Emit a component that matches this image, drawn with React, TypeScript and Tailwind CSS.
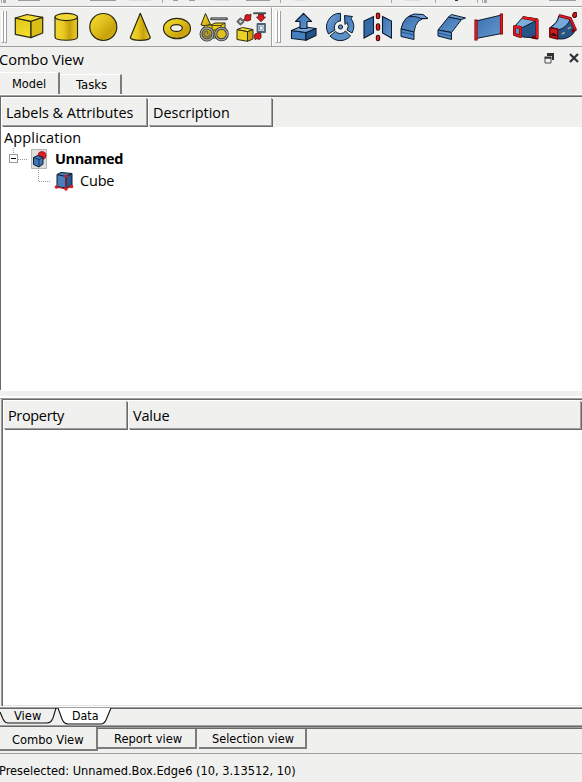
import React from "react";

const O = "#2b2a10";
const N = "#0b1b2e";

function Defs() {
  return (
    <svg className="absolute h-0 w-0">
      <defs>
        <linearGradient id="y" x1="0" y1="0" x2="1" y2="1">
          <stop offset="0" stopColor="#f8e13a" />
          <stop offset="1" stopColor="#c9a006" />
        </linearGradient>
        <linearGradient id="ys" x1="0" y1="0" x2="1" y2="1">
          <stop offset="0.1" stopColor="#f3da30" />
          <stop offset=".45" stopColor="#dcbc1a" />
          <stop offset=".7" stopColor="#c9a30c" />
          <stop offset="1" stopColor="#d9b716" />
        </linearGradient>
        <linearGradient id="yf" x1="0" y1="0" x2=".3" y2="1">
          <stop offset="0" stopColor="#e2c41c" />
          <stop offset="1" stopColor="#f2dc2a" />
        </linearGradient>
        <linearGradient id="yh" x1="0" y1="0" x2="1" y2="0">
          <stop offset="0" stopColor="#f0d830" />
          <stop offset=".35" stopColor="#e9cb22" />
          <stop offset=".65" stopColor="#c8a00c" />
          <stop offset="1" stopColor="#ecd02a" />
        </linearGradient>
        <linearGradient id="b" x1="0" y1="0" x2="1" y2="1">
          <stop offset="0" stopColor="#3a70b0" />
          <stop offset="1" stopColor="#6598cf" />
        </linearGradient>
        <linearGradient id="bd" x1="0" y1="0" x2="1" y2="1">
          <stop offset="0" stopColor="#79aadb" />
          <stop offset="1" stopColor="#3468a6" />
        </linearGradient>
      </defs>
    </svg>
  );
}

const icons: Record<string, React.ReactNode> = {
  box: (
    <g stroke={O} strokeWidth="1.2" strokeLinejoin="round">
      <path d="M1.3 6 17 9.3V25.6L1.3 22.3Z" fill="url(#yf)" />
      <path d="M17 9.3 28.7 5.3V21L17 25.6Z" fill="#dcbd18" />
      <path d="M1.3 6 13 2.5 28.7 5.3 17 9.3Z" fill="#f3dc38" />
    </g>
  ),
  cylinder: (
    <g stroke={O} strokeWidth="1.2">
      <path d="M4 5V25C4 29.3 26.5 29.3 26.5 25V5" fill="url(#yh)" />
      <ellipse cx="15.25" cy="5" rx="11.25" ry="3.6" fill="#f0d836" />
    </g>
  ),
  sphere: <circle cx="15.3" cy="15" r="13.5" fill="url(#ys)" stroke={O} strokeWidth="1.2" />,
  cone: <path d="M15.3 1.3 5.3 25.5C6.5 29.3 24 29.3 25.3 25.5Z" fill="url(#yh)" stroke={O} strokeWidth="1.2" strokeLinejoin="round" />,
  torus: (
    <path
      fillRule="evenodd"
      d="M1.5 16.5A13.5 10.2 0 0 1 28.5 16.5A13.5 10.2 0 0 1 1.5 16.5ZM8.7 16A5.8 3.4 0 0 0 20.3 16A5.8 3.4 0 0 0 8.7 16Z"
      fill="url(#ys)"
      stroke={O}
      strokeWidth="1.2"
    />
  ),
  primitives: (
    <g strokeLinejoin="round">
      <path d="M12.5 6.8H27.5" stroke="#55585a" strokeWidth="3" strokeLinecap="round" />
      <path d="M13 6.6H27" stroke="#8a8a8a" strokeWidth="1" />
      <path d="M12 13 16 11H26V20H12Z" fill="#eacb1b" stroke={O} />
      <path d="M12 13.5H22L26 11M22 13.5V20" stroke={O} fill="none" strokeWidth=".8" />
      <path d="M6.5 1.5 2 13Q6 15 11.5 12.5Z" fill="url(#y)" stroke={O} />
      <path d="M3 17 6 13.5 13 13V18H26V26H5Z" fill="#e4c61e" stroke={O} strokeWidth=".8" />
      <circle cx="8" cy="22" r="6" fill="#caa70c" stroke="#34383b" strokeWidth="3" />
      <circle cx="8" cy="22" r="6" fill="none" stroke="#a5a5a2" strokeWidth="1.3" />
      <path d="M8 22c2-1 0-3.5-1.5-2.5s-2 4 0 5 5 0 4.5-3" fill="none" stroke="#666" strokeWidth="1.5" />
      <circle cx="22.5" cy="22" r="5.8" fill="#e0c11c" stroke="#34383b" strokeWidth="3" />
      <circle cx="22.5" cy="22" r="5.8" fill="none" stroke="#a5a5a2" strokeWidth="1.3" />
    </g>
  ),
  builder: (
    <g strokeLinejoin="round">
      <path d="M1 17.5 11.5 19.5V29.3L1 27.5Z" fill="#ecd126" stroke={O} />
      <path d="M11.5 19.5 17 17.5V27L11.5 29.3Z" fill="#c9a508" stroke={O} />
      <path d="M1 17.5 6.5 15.5 17 17.5 11.5 19.5Z" fill="#f6e13b" stroke={O} />
      <path d="M4.5 6.5 7.5 9.5 4.5 12.5 1.5 9.5Z" fill="#ddd" stroke="#66696c" strokeWidth="2" />
      <path d="M18 1.3H30" stroke="#4f5356" strokeWidth="2" strokeLinecap="round" />
      <path d="m9 3.5 2-1 2 .5 2-1-.5 6-3 1-4-1 1.5-2Z" fill="#dc161b" stroke="#54090b" strokeWidth=".8" />
      <path d="M22.5 2.5H27.5V5H29.5L25 9.8 20.5 5H22.5Z" fill="#dc161b" stroke="#54090b" strokeWidth=".8" />
      <path d="M21.5 12H29V20H21.5Z" fill="#e6edf4" stroke="#4c6076" strokeWidth="1.8" />
      <path d="M23.5 14H27V18H23.5Z" fill="#f5f8fb" stroke="#7c90a6" />
      <path d="m19 22 3-1 3 .5 0 4-1.5 2-3-1-1 1.5-1.5-3Z" fill="#dc161b" stroke="#54090b" strokeWidth=".8" />
    </g>
  ),
  extrude: (
    <g stroke={N} strokeWidth="1.1" strokeLinejoin="round">
      <path d="M3.5 18.5 18 20.5V28.3L3.5 26.5Z" fill="#467fbd" />
      <path d="M18 20.5 28 16.5V23.5L18 28.3Z" fill="#245387" />
      <path d="M3.5 18.5 13 14.5 28 16.5 18 20.5Z" fill="#79aadb" />
      <path d="M15.5 1.3 23.5 9.5H19V16.5H12V9.5H7.5Z" fill="url(#b)" />
    </g>
  ),
  revolve: (
    <g stroke={N} strokeWidth="1" strokeLinejoin="round">
      <path d="M15.5 1.3A13.7 13.7 0 0 0 3.5 22L10 18A6.3 6.3 0 0 1 15.5 9Z" fill="url(#bd)" />
      <path d="M5 24A13.7 13.7 0 0 0 25.5 24L20.5 19A6.5 6.5 0 0 1 10.5 19.5Z" fill="#5c90c9" />
      <path d="M19.5 3.5 27.5 4.5 26 6.5A13.5 13.5 0 0 1 27 21L22 18A6.5 6.5 0 0 0 22 10.5L20 12.5Z" fill="url(#b)" />
      <circle cx="15.5" cy="15" r="2.1" fill="#5b8fc8" />
    </g>
  ),
  mirror: (
    <g stroke={N} strokeWidth="1.1">
      <path d="M2 9 11.5 4.5V21L2 26Z" fill="#356aa8" />
      <path d="M20.5 4.5 29.5 9V26L20.5 21Z" fill="url(#b)" />
      <path d="M16 2.8V5M16 13.5V16.5M16 25V27" stroke="#3a0608" strokeWidth="4.4" strokeLinecap="round" />
      <path d="M16 2.8V5M16 13.5V16.5M16 25V27" stroke="#e51b20" strokeWidth="2.4" strokeLinecap="round" />
    </g>
  ),
  fillet: (
    <g stroke={N} strokeWidth="1" strokeLinejoin="round">
      <path d="M2 17Q5 2.500 17 2.500H23L29 6.500Q17 5 15 20Z" fill="url(#b)" />
      <path d="M10 4.500 15 2 24 2.500 29 6.500 22 6.500Q18 4 10 4.500Z" fill="#6fa1d6" />
      <path d="M2 17 15 20V27.500L2 24.500Z" fill="#5089c6" />
      <path d="M2 20 15 23" fill="none" stroke="#173f70" strokeWidth=".7" />
    </g>
  ),
  chamfer: (
    <g stroke={N} strokeWidth="1" strokeLinejoin="round">
      <path d="M2 18 12.500 5 25.500 7.500 15.500 20.500Z" fill="url(#b)" />
      <path d="M12.500 5 15.500 2.500 29.500 6 25.500 7.500Z" fill="#6fa1d4" />
      <path d="M2 18 15.500 20.500V27.500L2 24Z" fill="#5089c6" />
      <path d="M2 21 15.500 24" stroke="#173f70" strokeWidth=".7" />
    </g>
  ),
  ruled: (
    <g>
      <path d="M3 9 28.500 3V21.500L3 26.500Z" fill="url(#b)" stroke={N} />
      <path d="M3 7.500V28.500M28.500 1.500V22.500" stroke="#7f0a0d" strokeWidth="3.200" />
      <path d="M3 8.500V27.500M28.500 2.500V21.500" stroke="#e01a20" strokeWidth="1.800" />
    </g>
  ),
  loft: (
    <g strokeLinejoin="round" transform="translate(1.5 0)">
      <path d="M4 15 12 5 26 7V26L11 25Z" fill="#245489" stroke={N} />
      <path d="M3 14.500 11.500 5 26 8 11 15.500Z" fill="#7cacda" stroke={N} />
      <path d="M11 5.500 25.500 8V26L20 25" fill="none" stroke="#70080b" strokeWidth="3.200" />
      <path d="M11 5.500 25.500 8V26" fill="none" stroke="#e01a20" strokeWidth="2" />
      <path d="M3 14.500 9 15.500V24.500L3 22.500Z" fill="#5d92cb" stroke="#70080b" strokeWidth="3" />
      <path d="M3 14.500 9 15.500V24.500L3 22.500Z" fill="none" stroke="#e01a20" strokeWidth="1.800" />
    </g>
  ),
  sweep: (
    <g strokeLinejoin="round" transform="translate(.8 0)">
      <path d="M3 15Q10 11 11 4L23 6 28 18Q22 28 11 27Z" fill="#245489" stroke={N} />
      <path d="M3 15Q10 11 11 4L23 6Q20 15 11 18Z" fill="#76a8d9" stroke={N} />
      <path d="M14 22l3-1.500M20 17l3-2M23 10l1-2" stroke="#b5a977" strokeWidth="1.500" />
      <path d="M11 3.500 22.500 6.500 27.500 17.500 24 19.500" fill="none" stroke="#70080b" strokeWidth="3" />
      <path d="M11 3.500 22.500 6.500 27.500 17.500" fill="none" stroke="#e01a20" strokeWidth="1.800" />
      <path d="M2 16 10 17V27L2 25Z" fill="#cf1b20" stroke="#70080b" strokeWidth="1.500" />
      <path d="M3.500 23Q5 19 9 24Z" fill="#5a1518" stroke="#310506" />
      <ellipse cx="27" cy="3" rx="2" ry="2.600" fill="#cf1b20" stroke="#400507" transform="rotate(20 27 3)" />
    </g>
  ),
};

function Icon({ name }: { name: string }) {
  return (
    <svg className="h-[30px] w-[30px] shrink-0" viewBox="0 0 30 30" fill="none">
      {icons[name]}
    </svg>
  );
}

function Grip() {
  return (
    <div className="flex h-8 w-[6px] shrink-0 justify-between">
      <i className="w-[3px] border-r border-b border-l border-[#9f9f9f] border-l-white bg-white" />
      <i className="w-[3px] border-r border-b border-l border-[#9f9f9f] border-l-white bg-white" />
    </div>
  );
}

// Lower edges of the toolbar above: [left, width, kind]
const fragments: [number, number, "blob" | "faint" | "line" | "dark"][] = [
  [1, 1, "line"], [3, 3, "line"], [18, 22, "blob"], [90, 26, "blob"], [129, 22, "faint"], [162, 1, "line"],
  [173, 5, "blob"], [189, 6, "blob"], [215, 15, "faint"], [246, 24, "blob"], [280, 1, "line"],
  [295, 10, "faint"], [391, 1, "line"], [405, 15, "faint"], [435, 1, "line"], [455, 3, "dark"],
  [477, 1, "line"], [482, 1, "line"], [484, 3, "line"], [549, 27, "blob"],
];

const fragmentStyle = {
  blob: "h-[1px] bg-[#9c9c9c]",
  faint: "h-[1px] bg-[#dcdcdc]",
  dark: "h-[1px] bg-[#34343c]",
  line: "h-[3px] bg-[#a8a8a8]",
};

function UpperToolbar() {
  return (
    <div className="relative h-[6px] shrink-0 overflow-hidden">
      {fragments.map(([x, w, k]) => (
        <i key={x} style={{ left: x, width: w }} className={"absolute top-0 " + fragmentStyle[k]} />
      ))}
    </div>
  );
}

const ui = "[font-family:'Open_Sans','Noto_Sans',sans-serif]";
const tah = "[font-family:'DejaVu_Sans_Condensed','DejaVu_Sans',sans-serif] [font-stretch:condensed]";

function Text({ children, className = "" }: { children: React.ReactNode; className?: string }) {
  return <span className={"block whitespace-nowrap " + className}>{children}</span>;
}

function HeaderCell({ children, className }: { children: React.ReactNode; className: string }) {
  return (
    <div className={"flex shrink-0 items-center border-t border-l border-t-white border-l-white " + className}>
      <div className="flex h-full w-full items-center border-r border-b border-[#9f9f9f] shadow-[1px_1px_0_#696969]">{children}</div>
    </div>
  );
}

export default function App() {
  return (
    <div className={"flex h-[782px] w-[582px] flex-col overflow-hidden bg-[#f0f0ef] text-black " + ui}>
      <Defs />
      <UpperToolbar />
      <div className="flex h-[41px] shrink-0 border-t border-b border-[#9f9f9f]">
        <div className="flex w-[272px] items-center border-t border-r border-t-white border-r-[#9f9f9f] pl-px">
          <Grip />
          <div className="ml-[7px] flex gap-[7px]">
            {["box", "cylinder", "sphere", "cone", "torus", "primitives", "builder"].map((n) => <Icon key={n} name={n} />)}
          </div>
        </div>
        <div className="flex flex-1 items-center border-t border-l border-white pl-[2px]">
          <Grip />
          <div className="ml-[7px] flex gap-[7px]">
            {["extrude", "revolve", "mirror", "fillet", "chamfer", "ruled", "loft", "sweep"].map((n) => <Icon key={n} name={n} />)}
          </div>
        </div>
      </div>

      <div className="flex h-[25px] shrink-0 items-center">
        <Text className="-ml-px text-[14.6px]">Combo View</Text>
        <svg className="mb-[3px] ml-auto h-[11px] w-[11px]" viewBox="0 0 11 11">
          <path d="M3 0H10V7H8V3H3Z" fill="#303030" />
          <path d="M1 5H7V10H1Z" fill="#f0f0ef" stroke="#4a4a4a" />
          <path d="M.5 4.5H7.5" stroke="#303030" strokeWidth="2" />
        </svg>
        <svg className="mr-[3px] mb-[3px] ml-[14px] h-[10px] w-[10px]" viewBox="0 0 10 10">
          <path d="M1 1 9 9M9 1 1 9" stroke="#303238" strokeWidth="2.2" />
        </svg>
      </div>

      <div className="flex h-[22px] shrink-0 items-end">
        <div className="flex h-[22px] w-[60px] items-center border-t border-r-2 border-t-white border-r-[#7c7c7c] pl-[12px]">
          <Text className={"text-[12.7px] " + tah}>Model</Text>
        </div>
        <div className="flex h-[20px] w-[62px] items-center border-t border-r-2 border-t-white border-r-[#7c7c7c] pl-[16px]">
          <Text className={"text-[13px] " + tah}>Tasks</Text>
        </div>
      </div>
      <div className="h-px shrink-0 bg-white" />
      <div className="h-px shrink-0 bg-[#9f9f9f]" />
      <div className="flex h-[294px] shrink-0 flex-col border-t border-l border-[#696969]">
        <div className="flex h-[30px] shrink-0">
          <HeaderCell className="h-[29px] w-[146px]"><Text className="pt-[2px] pl-[4px] text-[14.4px]">Labels &amp; Attributes</Text></HeaderCell>
          <HeaderCell className="ml-px h-[29px] w-[124px]"><Text className="pt-[2px] pl-[4px] text-[14.4px]">Description</Text></HeaderCell>
        </div>
        <div className="flex-1 bg-white">
          <Text className="h-[21px] pl-[3px] text-[14.5px] leading-[21px] tracking-[0.15px]">Application</Text>
          <div className="flex h-[22px] items-center">
            <svg className="h-[22px] w-[27px]" viewBox="0 0 27 22" fill="none" shapeRendering="crispEdges">
              <path d="M12.5 0V6M17 11.5H26" stroke="#999" strokeDasharray="1 1" />
              <path d="M8.5 6.5H16.5V14.5H8.5Z" fill="#fff" stroke="#999" />
              <path d="M10 10.5H15" stroke="#000" />
            </svg>
            <svg className="ml-[3px] h-[20px] w-[17px]" viewBox="0 0 17 20">
              <path d="M.5 .5H15.5V19.5H.5Z" fill="#dededd" stroke="#b5b5b5" />
              <circle cx="11" cy="6.500" r="4" fill="#d91f26" stroke="#a2181c" strokeWidth=".8" />
              <path d="M2.500 8.500 7 6.500 12 8.500V15L8 18 2.500 15.500Z" fill="#3f76b4" stroke={N} strokeLinejoin="round" />
              <path d="M2.500 8.500 8 10.500 12 8.500M8 10.500V18" fill="none" stroke={N} strokeWidth=".7" />
            </svg>
            <Text className="ml-[7px] text-[14.5px] font-bold tracking-[-0.4px]">Unnamed</Text>
          </div>
          <div className="flex h-[22px] items-center">
            <svg className="h-[22px] w-[52px]" viewBox="0 0 52 22" fill="none" shapeRendering="crispEdges">
              <path d="M37.5 0V11.5H50" stroke="#999" strokeDasharray="1 1" />
            </svg>
            <svg className="ml-[1px] h-[20px] w-[20px]" viewBox="0 0 20 20">
              <path d="M3 3.500 7 1.500 18 2.500 12 5.500V17L3 15.500Z" fill="#4a80bc" stroke={N} strokeLinejoin="round" />
              <path d="M12 5.500 18 2.500V14L12 17Z" fill="#285a91" stroke={N} />
              <path d="M3 3.500 12 5.500" stroke={N} />
              <path d="M12 5V17.500M2 16 12 18 18 15" fill="none" stroke="#b61b20" strokeWidth="1.100" />
              <g fill="#d91c22"><circle cx="12" cy="5" r="1.600" /><circle cx="2.500" cy="16" r="1.800" /><circle cx="12" cy="18" r="1.700" /><circle cx="17.500" cy="15.500" r="1.800" /></g>
            </svg>
            <Text className="ml-[6px] text-[14.5px] tracking-[-0.2px]">Cube</Text>
          </div>
        </div>
      </div>

      <div className="h-[8px] shrink-0 border-t border-b-2 border-white" />
      <div className="h-px shrink-0 bg-[#9f9f9f]" />
      <div className="ml-px flex h-[307px] shrink-0 border-l border-[#9f9f9f]">
        <div className="flex flex-1 flex-col border-t border-l border-[#696969]">
          <div className="flex h-[30px] shrink-0 bg-white">
            <HeaderCell className="h-[29px] w-[124px] bg-[#f0f0ef]"><Text className="pt-[2px] pl-[4px] text-[14.5px] tracking-[-0.35px]">Property</Text></HeaderCell>
            <HeaderCell className="ml-px h-[29px] w-[453px] bg-[#f0f0ef]"><Text className="pt-[2px] pl-[4px] text-[14.5px] tracking-[-0.2px]">Value</Text></HeaderCell>
          </div>
          <div className="flex-1 border-b border-[#e3e3e3] bg-white" />
        </div>
      </div>
      <div className="h-px shrink-0 bg-white" />
      <div className="relative h-[18px] shrink-0 border-t border-[#9f9f9f]">
        <svg className="absolute inset-x-0 top-0 h-[17px] w-[582px]" viewBox="0 0 582 17" fill="none">
          <path d="M0 .5H582" stroke="#696969" />
          <path d="M58 0 62 11Q64 15.5 68 15.5H101Q104 15.5 106 12L111 0Z" fill="#fff" />
          <path d="M0 4 3 11Q5 15 8 15H47Q51 15 53 10L56 0M58 0 62 11Q64 16 68 16H101Q104 16 106 12L111 0" stroke="#111" strokeWidth="1.1" />
        </svg>
        <div className="relative flex h-[17px] items-center pl-[14px]">
          <Text className={"w-[58px] pb-[2px] text-[12.8px] " + tah}>View</Text>
          <Text className={"text-[12.3px] " + tah}>Data</Text>
        </div>
      </div>
      <div className="h-[4px] shrink-0 bg-[linear-gradient(#9f9f9f_25%,#696969_25%,#696969_50%,#9f9f9f_50%,#9f9f9f_75%,#696969_75%)]" />
      <div className="flex h-[24px] shrink-0">
        <div className="-mt-[2px] flex h-[24px] w-[98px] items-center border-r-2 border-b-2 border-[#7c7c7c] bg-[#f0f0ef] pl-[12px]">
          <Text className={"pt-[3px] text-[12.8px] " + tah}>Combo View</Text>
        </div>
        <div className="flex h-[20px] w-[99px] items-center border-r-2 border-b-2 border-[#7c7c7c] pl-[16px]">
          <Text className={"pt-[2px] text-[12.8px] " + tah}>Report view</Text>
        </div>
        <div className="ml-[2px] flex h-[20px] w-[108px] items-center border-r-2 border-b-2 border-[#7c7c7c] pl-[13px]">
          <Text className={"pt-[2px] text-[12.6px] " + tah}>Selection view</Text>
        </div>
      </div>
      <div className="flex flex-1 items-center border-t border-[#9f9f9f] pt-[6px]">
        <Text className={"-ml-px text-[12.7px] " + tah}>Preselected: Unnamed.Box.Edge6 (10, 3.13512, 10)</Text>
      </div>
    </div>
  );
}
